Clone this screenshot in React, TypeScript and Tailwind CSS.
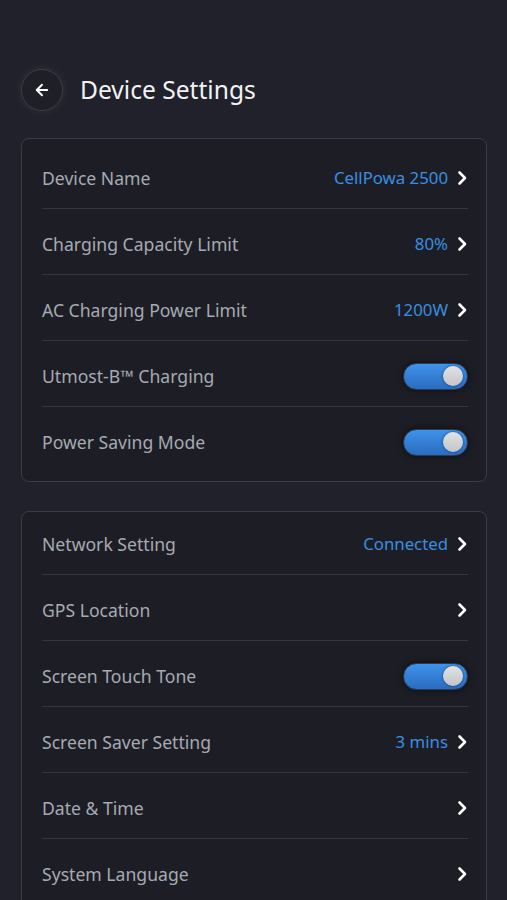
import { ArrowLeft } from "lucide-react";

type Row = {
  label: string;
  value?: string;
  toggle?: boolean;
  chevron?: boolean;
};

const deviceRows: Row[] = [
  { label: "Device Name", value: "CellPowa 2500", chevron: true },
  { label: "Charging Capacity Limit", value: "80%", chevron: true },
  { label: "AC Charging Power Limit", value: "1200W", chevron: true },
  { label: "Utmost-B™ Charging", toggle: true },
  { label: "Power Saving Mode", toggle: true },
];

const systemRows: Row[] = [
  { label: "Network Setting", value: "Connected", chevron: true },
  { label: "GPS Location", chevron: true },
  { label: "Screen Touch Tone", toggle: true },
  { label: "Screen Saver Setting", value: "3 mins", chevron: true },
  { label: "Date & Time", chevron: true },
  { label: "System Language", chevron: true },
];

function Chevron() {
  return (
    <svg width="12" height="16" viewBox="0 0 12 16" className="ml-[8px]">
      <path d="M3.5 2.5 L9 8 L3.5 13.5" fill="none" stroke="#ffffff" strokeWidth="2.6" strokeLinecap="round" strokeLinejoin="round" />
    </svg>
  );
}

function Toggle() {
  return (
    <div className="flex h-[27px] w-[65px] items-center justify-end rounded-full border border-[#2a3b55] bg-gradient-to-b from-[#3f93ea] to-[#2a6cc0] pr-[4px] shadow-[0_0_6px_rgba(0,0,0,0.6)]">
      <div className="h-[20px] w-[20px] rounded-full bg-gradient-to-b from-[#e2e2e4] to-[#c4c5c9] shadow-[0_0_3px_rgba(0,0,0,0.5)]" />
    </div>
  );
}

function SettingsCard({ rows, top }: { rows: Row[]; top: string }) {
  return (
    <div className={`rounded-[8px] border border-[#3a3c44] bg-[#1d1e25] pb-[9px] pl-[20px] pr-[18px] ${top}`}>
      {rows.map((row, i) => (
        <div key={row.label}>
          {i > 0 && <div className="mb-[5px] h-px bg-[#35373f]" />}
          <div className="flex h-[60px] items-center justify-between">
            <span className="text-[17.6px] text-[#a6aab2]">{row.label}</span>
            <div className="flex items-center">
              {row.value && <span className="text-[16.8px] text-[#3a8ee0]">{row.value}</span>}
              {row.chevron && <Chevron />}
              {row.toggle && <Toggle />}
            </div>
          </div>
        </div>
      ))}
    </div>
  );
}

export default function App() {
  return (
    <div className="min-h-[900px] w-[507px] overflow-hidden bg-[#20212a] pl-[21px] pr-[20px] font-['Noto_Sans','Open_Sans',sans-serif]">
      <div className="flex items-center pt-[69px]">
        <button className="flex h-[42px] w-[42px] items-center justify-center rounded-full border border-[#3b3d46] bg-[#1e1f27] shadow-[0_0_10px_rgba(255,255,255,0.08)]">
          <ArrowLeft className="h-[18px] w-[18px] text-white" strokeWidth={2.5} />
        </button>
        <h1 className="ml-[17px] text-[24.6px] text-[#f2f2f4]">Device Settings</h1>
      </div>

      <div className="mt-[27px]">
        <SettingsCard rows={deviceRows} top="pt-[9px]" />
      </div>
      <div className="mt-[29px]">
        <SettingsCard rows={systemRows} top="pt-[2px]" />
      </div>
    </div>
  );
}
